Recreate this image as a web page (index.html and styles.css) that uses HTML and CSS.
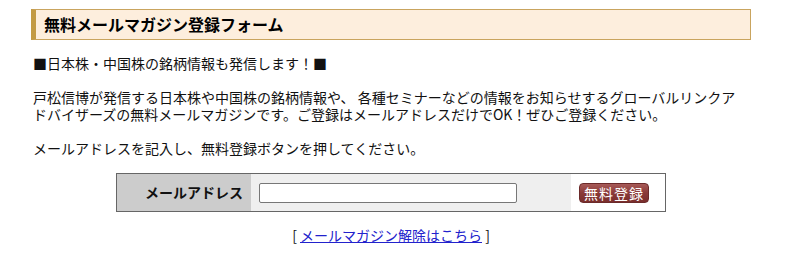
FILE: index.html
```html
<!DOCTYPE html>
<html lang="ja">
<head>
<meta charset="utf-8">
<link rel="stylesheet" href="styles.css">
</head>
<body>
<div class="page">
  <h2 class="title">無料メールマガジン登録フォーム</h2>
  <p class="lead">■日本株・中国株の銘柄情報も発信します！■</p>
  <p class="text">戸松信博が発信する日本株や中国株の銘柄情報や、 各種セミナーなどの情報をお知らせするグローバルリンクアドバイザーズの無料メールマガジンです。ご登録はメールアドレスだけでOK！ぜひご登録ください。</p>
  <p class="text">メールアドレスを記入し、無料登録ボタンを押してください。</p>
  <form class="form" onsubmit="return false">
    <div class="label">メールアドレス</div>
    <div class="field"><input class="input" type="text"></div>
    <div class="action"><button class="btn" type="button">無料登録</button></div>
  </form>
  <p class="cancel">[ <a href="#">メールマガジン解除はこちら</a> ]</p>
</div>
</body>
</html>
```
FILE: styles.css
```css
html, body {
  margin: 0;
  padding: 0;
  background: #fff;
}
body {
  font-family: "Noto Sans CJK JP", "Noto Sans", sans-serif;
  font-size: 14px;
  line-height: 17px;
  color: #111;
}
.page {
  width: 720px;
  margin: 0 0 0 31px;
  padding-top: 9px;
}
.title {
  margin: 0;
  height: 29px;
  line-height: 29px;
  font-size: 16px;
  font-weight: bold;
  color: #000;
  background: #fdeedd;
  border: 1px solid #c9a45e;
  border-left: 5px solid #c39a43;
  padding-left: 8px;
}
.lead {
  margin: 15px 0 0 2px;
}
.text {
  max-width: 710px;
  margin: 17px 0 0 2px;
}
.form {
  display: flex;
  width: 548px;
  height: 37px;
  margin: 16px auto 0;
  border: 1px solid #666;
}
.label {
  width: 126px;
  padding-right: 8px;
  background: #cccccc;
  font-weight: bold;
  color: #111;
  display: flex;
  align-items: center;
  justify-content: flex-end;
}
.field {
  width: 312px;
  padding-left: 8px;
  background: #efefef;
  display: flex;
  align-items: center;
}
.input {
  box-sizing: border-box;
  width: 258px;
  height: 20px;
  margin: 0;
  border: 1px solid #777;
  border-radius: 2px;
  background: #fff;
  padding: 0 4px;
}
.action {
  flex: 1;
  padding-left: 8px;
  display: flex;
  align-items: center;
}
.btn {
  width: 70px;
  height: 20px;
  padding: 0;
  border: 1px solid #6b2a2a;
  border-radius: 4px;
  background: linear-gradient(#a75a58, #8a3a38 50%, #7a2e2c);
  color: #fff;
  font-family: "Noto Sans CJK JP", sans-serif;
  font-size: 14px;
  line-height: 18px;
  letter-spacing: 1px;
  cursor: pointer;
}
.cancel {
  margin: 15px 0 0;
  text-align: center;
}
.cancel a {
  color: #2222cc;
}
```
